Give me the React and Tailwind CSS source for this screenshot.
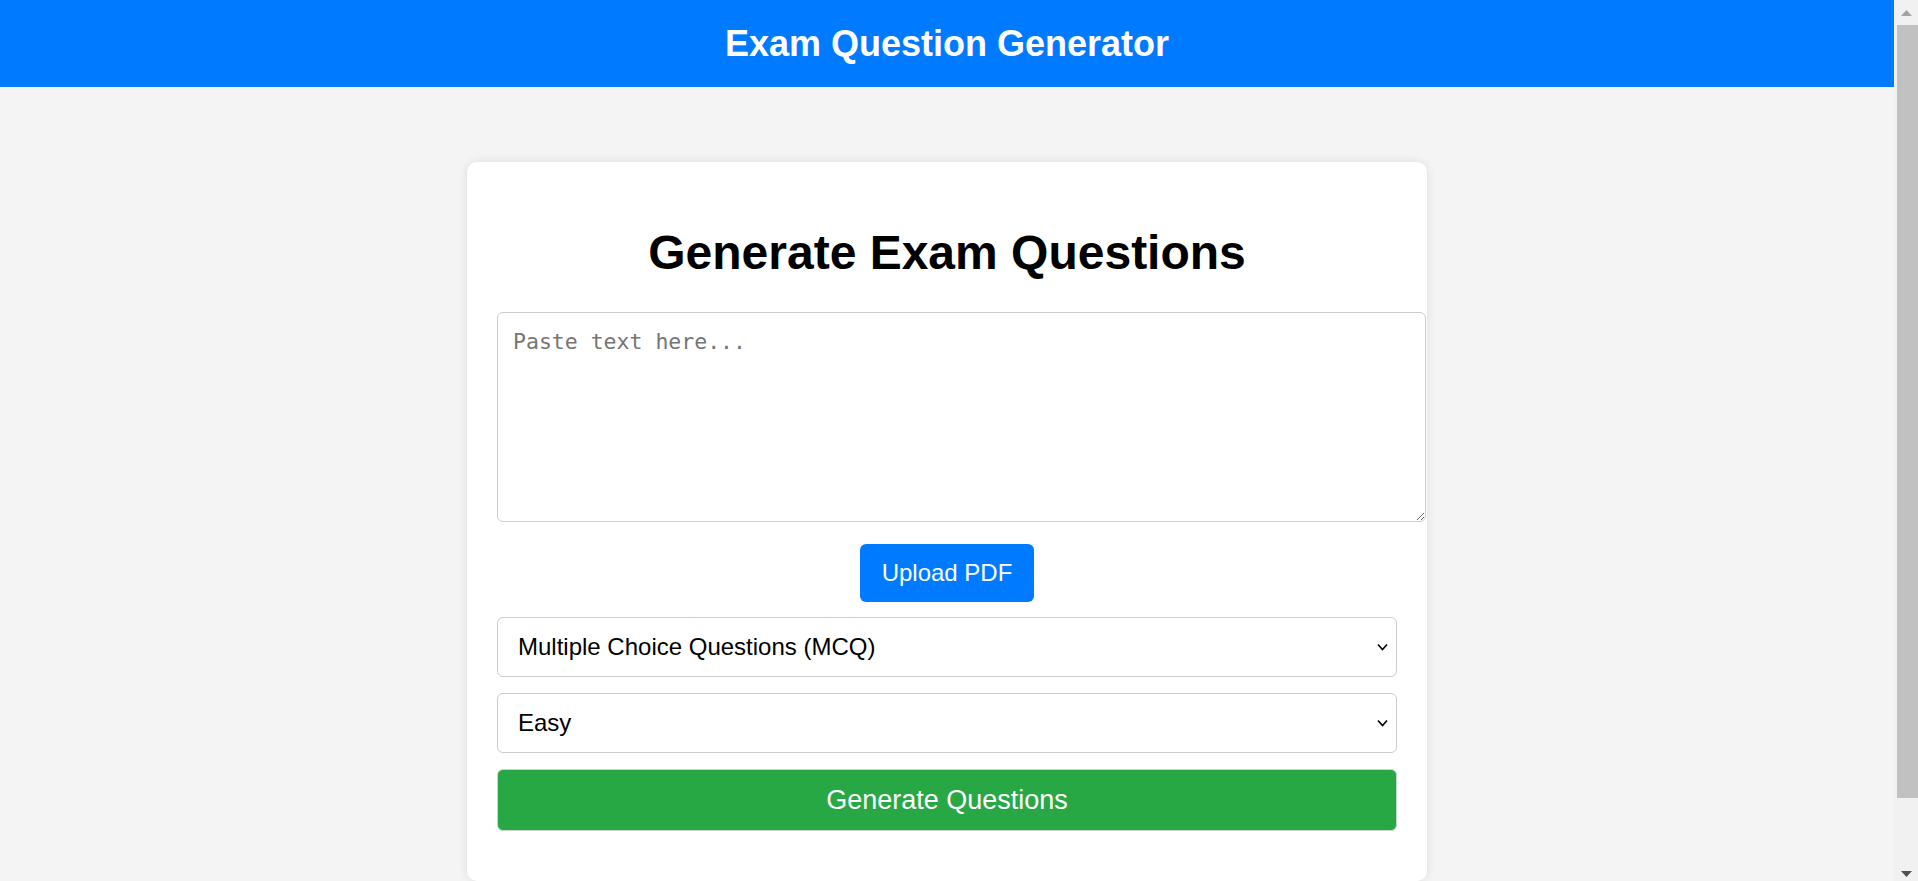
import React, { useState } from 'react'

const Chevron = () => (
  <svg
    className="pointer-events-none absolute right-[9px] top-1/2 -translate-y-1/2"
    width="11"
    height="8"
    viewBox="0 0 11 8"
    fill="none"
  >
    <path d="M1 1.5l4.5 5 4.5-5" stroke="#000" strokeWidth="1.6" />
  </svg>
)

// browser scrollbar, as it shows in the screenshot
const ScrollBar = () => (
  <div className="fixed top-0 right-0 w-[24px] h-screen bg-[#f1f1f1] flex flex-col items-center">
    <svg className="mt-[10px] shrink-0" width="11" height="6" viewBox="0 0 11 6">
      <path d="M5.5 0L11 6H0z" fill="#a3a3a3" />
    </svg>
    <div className="mt-[9px] ml-[2px] w-[21px] h-[773px] bg-[#c1c1c1]" />
    <svg className="mt-auto mb-[4px] shrink-0" width="11" height="6" viewBox="0 0 11 6">
      <path d="M0 0h11L5.5 6z" fill="#505050" />
    </svg>
  </div>
)

const App = () => {
  const [text, setText] = useState('')
  const [type, setType] = useState('mcq')
  const [level, setLevel] = useState('easy')

  return (
    <div className="min-h-screen bg-[#f4f4f4] font-['Liberation_Sans',Arial,sans-serif]">
      <div className="mr-[24px] pb-[85px]">
        {/* Header */}
        <header className="h-[87px] bg-[#007bff] flex items-center justify-center">
          <h1 className="text-white text-[36px] font-bold leading-none">Exam Question Generator</h1>
        </header>

        {/* Card */}
        <main className="pt-[75px]">
          <div className="w-[960px] mx-auto bg-white rounded-[10px] shadow-[0_0_10px_rgba(0,0,0,0.1)] px-[30px] pt-[30px] pb-[50px]">
            <h2 className="text-[48px] leading-[55px] font-bold text-center text-black mt-[33px] mb-[32px]">
              Generate Exam Questions
            </h2>

            <textarea
              value={text}
              onChange={(e) => setText(e.target.value)}
              placeholder="Paste text here..."
              className="block w-[929px] h-[210px] p-[15px] border border-[#ccc] rounded-[6px] font-['DejaVu_Sans_Mono',monospace] text-[21.5px] leading-[27px] placeholder:text-[#757575] outline-none"
            />

            <div className="flex justify-center mt-[22px]">
              <button className="h-[58px] px-[22px] rounded-[6px] bg-[#007bff] text-white text-[24px]">
                Upload PDF
              </button>
            </div>

            <div className="relative mt-[15px]">
              <select
                value={type}
                onChange={(e) => setType(e.target.value)}
                className="appearance-none w-full h-[60px] pl-[20px] pr-[30px] border border-[#ccc] rounded-[6px] bg-white text-[24px] text-black outline-none"
              >
                <option value="mcq">Multiple Choice Questions (MCQ)</option>
                <option value="short">Short Answer Questions</option>
                <option value="long">Long Answer Questions</option>
              </select>
              <Chevron />
            </div>

            <div className="relative mt-[16px]">
              <select
                value={level}
                onChange={(e) => setLevel(e.target.value)}
                className="appearance-none w-full h-[60px] pl-[20px] pr-[30px] border border-[#ccc] rounded-[6px] bg-white text-[24px] text-black outline-none"
              >
                <option value="easy">Easy</option>
                <option value="medium">Medium</option>
                <option value="hard">Hard</option>
              </select>
              <Chevron />
            </div>

            <button className="mt-[16px] w-full h-[62px] rounded-[6px] border border-[#c8d8cc] bg-[#28a745] text-white text-[27px]">
              Generate Questions
            </button>
          </div>
        </main>
      </div>
      <ScrollBar />
    </div>
  )
}

export default App
